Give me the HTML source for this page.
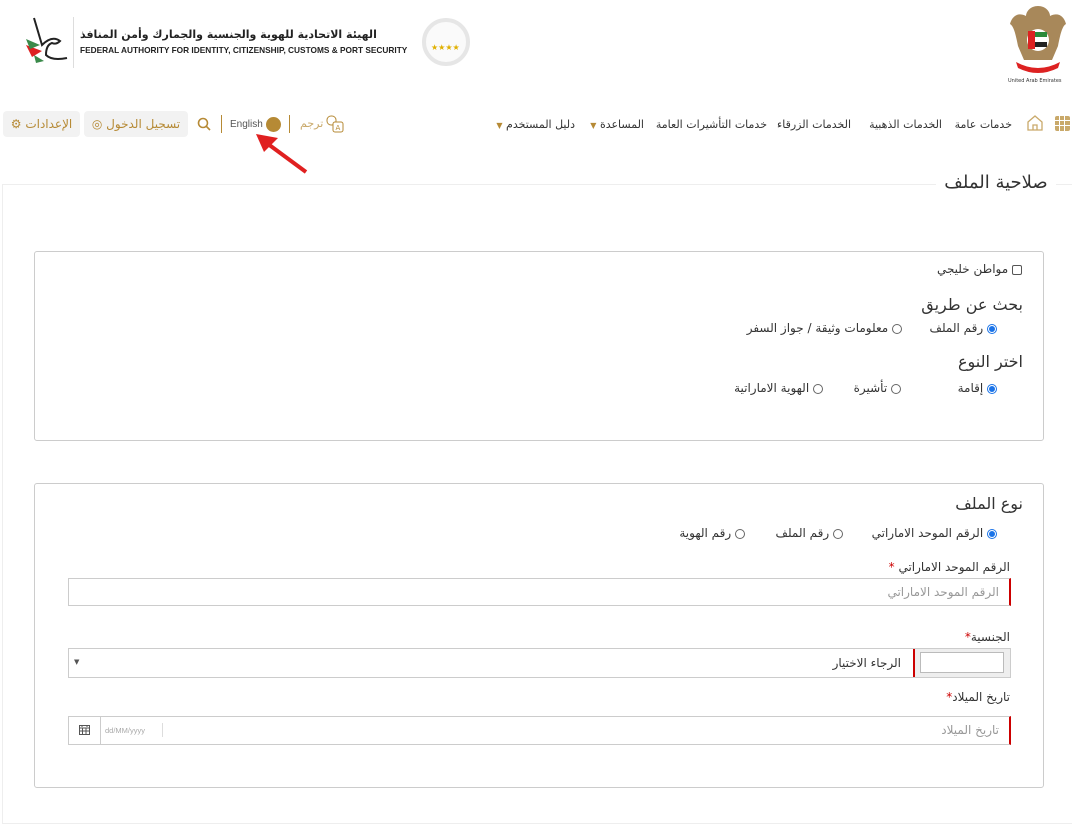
<!DOCTYPE html>
<html><head><meta charset="utf-8">
<style>
*{box-sizing:border-box;margin:0;padding:0}
body{width:1072px;height:803px;background:#fff;position:relative;overflow:hidden;font-family:"DejaVu Sans","Liberation Sans",sans-serif;color:#333}
.a{position:absolute;white-space:nowrap}
.nav{font-size:11px;color:#333;top:118px}
.box{position:absolute;border:1px solid #ccc;border-radius:3px;left:34px;width:1010px}
.rad{display:inline-block;width:10px;height:10px;border:1px solid #666;border-radius:50%;vertical-align:middle;position:relative}
.rad.on{border-color:#1a73e8}
.rad.on:after{content:"";position:absolute;left:1px;top:1px;width:6px;height:6px;border-radius:50%;background:#1a73e8}
.t12{font-size:12px;color:#333}
.inp{position:absolute;left:68px;width:943px;border:1px solid #ccc;border-right:2px solid #c00;background:#fff}
.ph{font-size:12px;color:#999}
</style></head><body>

<svg class="a" style="left:1008px;top:2px" width="60" height="80" viewBox="0 0 60 80">
<path d="M30 4 C22 4 18 10 18 14 C10 10 4 14 2 22 C6 24 8 34 10 44 L16 58 L44 58 L50 44 C52 34 54 24 58 22 C56 14 50 10 42 14 C42 10 38 4 30 4Z" fill="#a8885a"/>
<circle cx="30" cy="38" r="11" fill="#fff"/>
<rect x="20" y="29" width="7" height="18" fill="#d22"/>
<rect x="27" y="30" width="12" height="5" fill="#2a8a3a"/>
<rect x="27" y="40" width="12" height="5" fill="#222"/>
<path d="M8 60 Q30 72 52 60 L50 66 Q30 76 10 66Z" fill="#d22"/>
</svg>
<div class="a" style="left:1008px;top:78px;font-size:5px;color:#333">United Arab Emirates</div>

<svg class="a" style="left:12px;top:15px" width="60" height="50" viewBox="0 0 60 50">
<path d="M22 3 L30 30 Q40 20 48 26 Q44 30 40 28 Q34 30 34 40 Q40 46 55 43" fill="none" stroke="#222" stroke-width="2"/>
<path d="M14 30 L30 36 L20 42Z" fill="#d22"/><path d="M14 24 L28 30 L18 34Z" fill="#3a8a4a"/><path d="M22 40 L32 46 L24 48Z" fill="#3a8a4a"/>
</svg>
<div class="a" style="left:73px;top:17px;width:1px;height:51px;background:#ddd"></div>
<div class="a" style="left:80px;top:28px;font-size:11px;font-weight:bold;color:#222">الهيئة الاتحادية للهوية والجنسية والجمارك وأمن المنافذ</div>
<div class="a" style="left:80px;top:45px;font-size:8.3px;font-weight:bold;color:#222;font-family:'Liberation Sans',sans-serif">FEDERAL AUTHORITY FOR IDENTITY, CITIZENSHIP, CUSTOMS &amp; PORT SECURITY</div>
<div class="a" style="left:422px;top:18px;width:48px;height:48px;border-radius:50%;border:4px solid #e6e6e6;background:#fafafa"></div>
<div class="a" style="left:431px;top:43px;font-size:8px;color:#e0b000">★★★★</div>

<div class="a" style="left:3px;top:111px;width:77px;height:26px;background:#f2f2f2;border-radius:4px;font-size:12px;color:#b68a35;text-align:center;line-height:26px">⚙ الإعدادات</div>
<div class="a" style="left:84px;top:111px;width:104px;height:26px;background:#f2f2f2;border-radius:4px;font-size:12px;color:#b68a35;text-align:center;line-height:26px">◎ تسجيل الدخول</div>
<svg class="a" style="left:197px;top:117px" width="14" height="14" viewBox="0 0 14 14"><circle cx="6" cy="6" r="4.5" fill="none" stroke="#b68a35" stroke-width="1.6"/><path d="M9.5 9.5 L13 13" stroke="#b68a35" stroke-width="1.6"/></svg>
<div class="a" style="left:221px;top:115px;width:1px;height:18px;background:#b68a35"></div>
<div class="a" style="left:230px;top:119px;font-size:10px;color:#555;font-family:'Liberation Sans',sans-serif">English</div>
<div class="a" style="left:266px;top:117px;width:15px;height:15px;border-radius:50%;background:#b68a35"></div>
<div class="a" style="left:289px;top:115px;width:1px;height:18px;background:#b68a35"></div>
<div class="a" style="left:300px;top:117px;font-size:11px;color:#c9a96a">ترجم</div>
<svg class="a" style="left:326px;top:115px" width="18" height="18" viewBox="0 0 18 18"><rect x="1" y="1" width="9" height="9" rx="4" fill="none" stroke="#b68a35"/><rect x="7" y="7" width="10" height="10" rx="2" fill="#fff" stroke="#b68a35"/><text x="9.5" y="15" font-size="7" fill="#b68a35">A</text></svg>

<svg class="a" style="left:254px;top:132px" width="60" height="45" viewBox="0 0 60 45"><path d="M52 40 L14 12" stroke="#e02020" stroke-width="4"/><path d="M2 2 L24 6 L10 20Z" fill="#e02020"/></svg>

<div class="a" style="left:1055px;top:116px;width:15px;height:15px;background:#c9a96a;border-radius:2px;background-image:linear-gradient(90deg,transparent 4px,#fff 4px,#fff 5px,transparent 5px,transparent 9px,#fff 9px,#fff 10px,transparent 10px),linear-gradient(transparent 4px,#fff 4px,#fff 5px,transparent 5px,transparent 9px,#fff 9px,#fff 10px,transparent 10px)"></div>
<svg class="a" style="left:1026px;top:114px" width="18" height="18" viewBox="0 0 18 18"><path d="M2 8 L9 2 L16 8 L16 16 L2 16Z" fill="none" stroke="#c9a96a" stroke-width="1.3"/><path d="M7 16 V11 H11 V16" fill="none" stroke="#c9a96a" stroke-width="1.3"/></svg>
<div class="a nav" style="right:60px">خدمات عامة</div>
<div class="a nav" style="right:130px">الخدمات الذهبية</div>
<div class="a nav" style="right:221px">الخدمات الزرقاء</div>
<div class="a nav" style="right:305px">خدمات التأشيرات العامة</div>
<div class="a nav" style="right:428px"><span style="color:#b68a35;font-size:8px">▼</span> المساعدة</div>
<div class="a nav" style="right:497px"><span style="color:#b68a35;font-size:8px">▼</span> دليل المستخدم</div>

<div class="a" style="left:2px;top:184px;width:1080px;height:640px;border:1px solid #eee"></div>
<div class="a" style="left:936px;top:172px;width:120px;height:26px;background:#fff;font-size:18px;color:#333;text-align:center">صلاحية الملف</div>

<div class="box" style="top:251px;height:190px"></div>
<div class="a t12" style="right:50px;top:262px">مواطن خليجي <span style="display:inline-block;width:10px;height:10px;border:1px solid #555;border-radius:2px;vertical-align:middle"></span></div>
<div class="a" style="right:49px;top:295px;font-size:16px;color:#333">بحث عن طريق</div>
<div class="a t12" style="right:75px;top:321px">رقم الملف <span class="rad on"></span></div>
<div class="a t12" style="right:170px;top:321px">معلومات وثيقة / جواز السفر <span class="rad"></span></div>
<div class="a" style="right:49px;top:352px;font-size:16px;color:#333">اختر النوع</div>
<div class="a t12" style="right:75px;top:381px">إقامة <span class="rad on"></span></div>
<div class="a t12" style="right:171px;top:381px">تأشيرة <span class="rad"></span></div>
<div class="a t12" style="right:249px;top:381px">الهوية الاماراتية <span class="rad"></span></div>

<div class="box" style="top:483px;height:305px"></div>
<div class="a" style="right:49px;top:494px;font-size:16px;color:#333">نوع الملف</div>
<div class="a t12" style="right:75px;top:526px">الرقم الموحد الاماراتي <span class="rad on"></span></div>
<div class="a t12" style="right:229px;top:526px">رقم الملف <span class="rad"></span></div>
<div class="a t12" style="right:327px;top:526px">رقم الهوية <span class="rad"></span></div>

<div class="a t12" style="right:62px;top:560px"><span style="color:#c00">*</span> الرقم الموحد الاماراتي</div>
<div class="inp" style="top:578px;height:28px"></div>
<div class="a ph" style="right:73px;top:585px">الرقم الموحد الاماراتي</div>

<div class="a t12" style="right:62px;top:630px"><span style="color:#c00">*</span>الجنسية</div>
<div class="inp" style="top:648px;height:30px;border-right:1px solid #ccc"></div>
<div class="a" style="left:913px;top:649px;width:97px;height:28px;background:#eee;border-left:2px solid #c00"></div>
<div class="a" style="left:920px;top:652px;width:84px;height:21px;background:#fff;border:1px solid #bbb"></div>
<div class="a t12" style="right:171px;top:656px">الرجاء الاختيار</div>
<div class="a" style="left:74px;top:658px;font-size:7px;color:#555">▼</div>

<div class="a t12" style="right:62px;top:690px"><span style="color:#c00">*</span>تاريخ الميلاد</div>
<div class="inp" style="top:716px;height:29px"></div>
<div class="a" style="left:68px;top:716px;width:33px;height:29px;border:1px solid #ccc;background:#fff"></div>
<svg class="a" style="left:79px;top:724px" width="11" height="11" viewBox="0 0 11 11"><rect x="0.5" y="1.5" width="10" height="9" fill="none" stroke="#555"/><path d="M0 4H11M3 1V3M8 1V3M3.5 4V10M7 4V10M0 7H11" stroke="#555"/></svg>
<div class="a" style="left:105px;top:726px;font-size:7.5px;color:#aaa;font-family:'Liberation Sans',sans-serif">dd/MM/yyyy</div>
<div class="a" style="left:162px;top:723px;width:1px;height:14px;background:#ddd"></div>
<div class="a ph" style="right:73px;top:723px">تاريخ الميلاد</div>

</body></html>
